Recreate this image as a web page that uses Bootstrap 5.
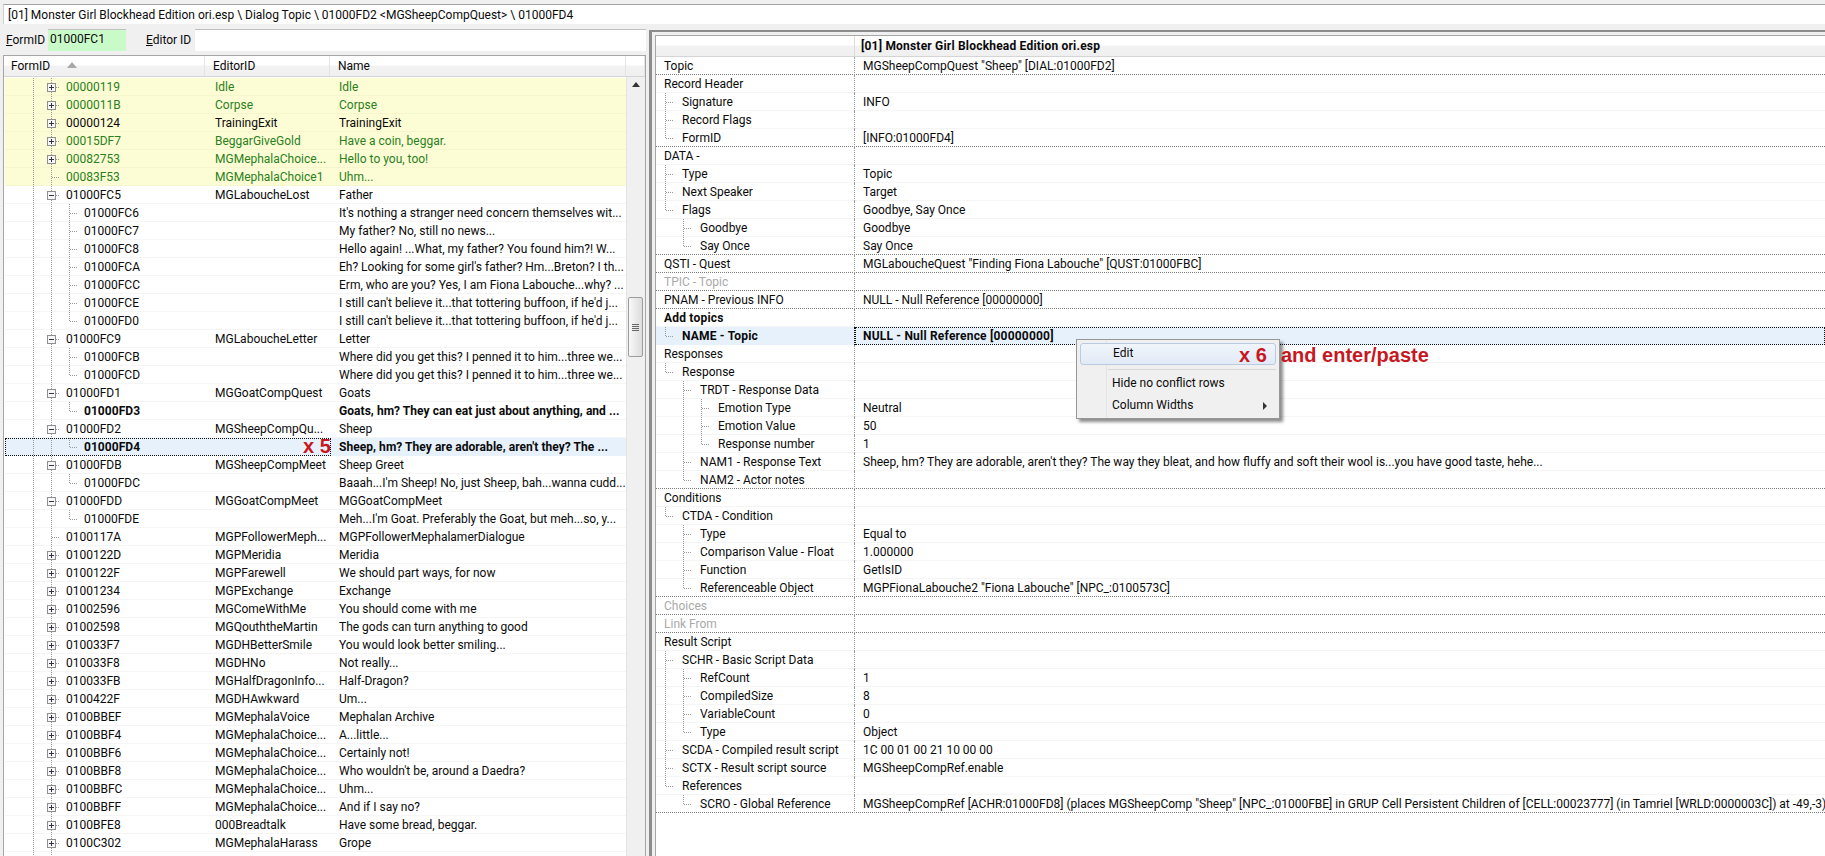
<!DOCTYPE html>
<html lang="en"><head><meta charset="utf-8"><title>xEdit</title>
<link href="https://cdn.jsdelivr.net/npm/bootstrap@5.3.0/dist/css/bootstrap.min.css" rel="stylesheet">
<style>
html,body{height:856px;overflow:hidden}
body{background:#f0f0f0;color:#0a0a0a;font:12px/16px Roboto,"Open Sans",sans-serif;--dv:repeating-linear-gradient(to bottom,#9a9a9a 0 1px,transparent 1px 2px);--dh:repeating-linear-gradient(to right,#9a9a9a 0 1px,transparent 1px 2px)}
.app{height:856px}
.fw-bold{letter-spacing:.2px}
.pathbar{margin:4px 0 0 3px;height:20px;flex:none;background:#fff;border-top:1px solid #a4a4a4;border-left:1px solid #d0d0d0;padding-left:4px;line-height:20px}
.lpane{width:646px;flex:none;padding-left:3px}
.filter{height:31px;padding-top:5px;flex:none}
.filter label{margin:3px 0 0 3px;width:42px;line-height:16px}
.filter label+input{width:78px}
.filter input+label{margin-left:20px;width:49px}
.filter input.form-control{height:22px;padding:0 2px 3px;border:0;border-top:1px solid #c0c0c0;border-radius:0;font:inherit;color:#0a0a0a;box-shadow:none}
.fid{background:#c9fbc9}
.grid{border:1px solid #a6a6a6;border-bottom:0;background:#fff}
.ghead{height:21px;flex:none;border-bottom:1px solid #d5d5d5;background:linear-gradient(#fff 45%,#f2f2f2 50%,#f0f0f0)}
.ghead>div{height:20px;line-height:21px;border-right:1px solid #e4e4e4}
.cw1{width:201px;padding-left:7px}.cw2{width:125px;padding-left:8px}.cw3{width:296px;padding-left:8px}.cw4{flex:1}
.sortup{width:0;height:0;display:inline-block;border:5px solid transparent;border-top:0;border-bottom:6px solid #a8a8a8;margin:0 0 2px 14px}
.lst{width:622px;flex:none;padding:1px 0 0 1px}
.scrollcol{flex:1;background:#f0f0f0;border-left:1px solid #e4e4e4;position:relative}
.arrowup{position:absolute;left:5px;top:5px;width:0;height:0;border:4px solid transparent;border-top:0;border-bottom:5px solid #333}
.thumb{position:absolute;left:1px;top:220px;width:15px;height:60px;border:1px solid #9d9d9d;border-radius:2px;background:linear-gradient(90deg,#f8f8f8,#dcdcdc)}
.thumb::after{content:"";position:absolute;left:3px;top:26px;width:7px;height:7px;background:repeating-linear-gradient(#666 0 1px,transparent 1px 2px)}
.lr{height:18px;line-height:18px;border-bottom:1px solid #f5f5f5}
.lr.fw-bold{letter-spacing:.05px}
.lr.ye{background:#fdfdd5;border-bottom-color:#f6f6cc}
.lr.gr{color:#2a7f1c}
.lr.sel{background:#e6f1fc;border-bottom-color:transparent;position:relative}
.lr.sel::before{content:"";position:absolute;left:0;top:0;width:326px;height:18px;border:1px dotted #111}
.c1{width:200px;padding-left:19px;background:var(--dv) 28px 0/1px 100% no-repeat;flex:none}
.c1 span{margin-left:6px}
.c2{width:125px;padding-left:9px;flex:none;white-space:nowrap;border-left:1px solid transparent}
.c3{flex:1;padding-left:9px;white-space:nowrap;overflow:hidden}
.xfive{color:#c8171e;font:700 20px/16px "Liberation Sans",sans-serif;margin-left:88px;letter-spacing:0}
.g{display:block;width:18px;height:18px;flex:none;position:relative}
.gv{background:var(--dv) 9px 0/1px 100% no-repeat}
.gt{background:var(--dv) 9px 0/1px 100% no-repeat,var(--dh) 10px 9px/8px 1px no-repeat}
.gl{background:var(--dv) 9px 0/1px 10px no-repeat,var(--dh) 10px 9px/8px 1px no-repeat}
.gp::after,.gm::after{content:"";position:absolute;left:5px;top:5px;width:9px;height:9px;border:1px solid #8e8f8f;background-color:#f6f6f6;background-repeat:no-repeat}
.gp::after{background-image:linear-gradient(#334,#334),linear-gradient(#334,#334);background-size:5px 1px,1px 5px;background-position:1px 3px,3px 1px}
.gm::after{background-image:linear-gradient(#334,#334);background-size:5px 1px;background-position:1px 3px}
.splitgap{width:3px;flex:none}
.rpane{margin-top:6px;border-top:2px solid #8c8c8c;border-left:3px solid #8c8c8c;padding:3px 0 0 3px;min-width:0}
.rgrid{border:1px solid #a6a6a6;border-width:1px 0 0 1px;background:#fff}
.rhead{height:21px;flex:none;border-bottom:1px solid #d5d5d5;background:linear-gradient(#fff 45%,#f2f2f2 50%,#f0f0f0);line-height:21px}
.rhead>div:first-child{width:199px;flex:none;border-right:1px solid #dcdcdc}
.rhead>div:last-child{padding-left:6px}
.rr{height:18px;line-height:18px;border-bottom:1px solid #f5f5f5;white-space:nowrap}
.rr.gb{border-bottom:1px dotted #7d7d7d}
.rl{width:199px;flex:none;padding-left:0;border-right:1px dotted #9a9a9a;height:18px;overflow:hidden}
.rl span{margin-left:8px}
.rv{padding-left:8px;flex:1}
.rr.dis{color:#a9a9a9}
.rr.foc{font-weight:700;letter-spacing:.2px;border-bottom-color:transparent}
.rr.foc .rl{background:#e6f1fc;border-right-color:#111}
.rr.foc .rv{background:#e6f1fc;outline:1px dotted #111;outline-offset:-1px;height:18px}
.ctx.dropdown-menu{top:339px;left:1076px;width:204px;height:80px;min-width:0;padding:3px;border:1px solid #979797;border-radius:0;background:#f0f0f0 linear-gradient(#e4e4e4,#e4e4e4) 29px 0/1px 100% no-repeat;box-shadow:3px 3px 3px rgba(0,0,0,.45);font:inherit;--bs-dropdown-font-size:12px;color:#0a0a0a}
.ctx .dropdown-item{height:22px;padding:0 0 0 32px;line-height:19px;font-size:12px;color:#0a0a0a;position:relative}
.ctx .dropdown-item.hot{background:linear-gradient(#f0f5fb,#e1eaf6);border:1px solid #b8cbe3;border-radius:3px;padding-left:32px}
.ctx .dropdown-divider{margin:4px 0 4px 28px;border-top:1px solid #d7d7d7;opacity:1}
.subarr{position:absolute;right:9px;top:6px;width:0;height:0;border:4px solid transparent;border-right:0;border-left:4px solid #333}
.note{position:absolute;top:344px;color:#c8171e;font:700 20px/22px "Liberation Sans",sans-serif;white-space:nowrap;z-index:1001}
.n6{left:1239px}.nap{left:1281px}
</style></head><body>
<div class="app d-flex flex-column overflow-hidden position-relative">
<div class="pathbar text-nowrap">[01] Monster Girl Blockhead Edition ori.esp \ Dialog Topic \ 01000FD2 &lt;MGSheepCompQuest&gt; \ 01000FD4</div>
<div class="d-flex flex-grow-1" style="min-height:0">
<div class="lpane d-flex flex-column">
<div class="filter d-flex"><label><u>F</u>ormID</label><input class="form-control fid" value="01000FC1"><label><u>E</u>ditor ID</label><input class="form-control flex-fill" value=""></div>
<div class="grid d-flex flex-column flex-grow-1 overflow-hidden">
<div class="ghead d-flex"><div class="cw1">FormID <i class="sortup"></i></div><div class="cw2">EditorID</div><div class="cw3">Name</div><div class="cw4"></div></div>
<div class="d-flex flex-grow-1">
<div class="lst">
<div class="lr ye gr d-flex"><div class="c1 d-flex"><i class="g"></i><i class="g gt gp"></i><span>00000119</span></div><div class="c2">Idle</div><div class="c3">Idle</div></div>
<div class="lr ye gr d-flex"><div class="c1 d-flex"><i class="g"></i><i class="g gt gp"></i><span>0000011B</span></div><div class="c2">Corpse</div><div class="c3">Corpse</div></div>
<div class="lr ye d-flex"><div class="c1 d-flex"><i class="g"></i><i class="g gt gp"></i><span>00000124</span></div><div class="c2">TrainingExit</div><div class="c3">TrainingExit</div></div>
<div class="lr ye gr d-flex"><div class="c1 d-flex"><i class="g"></i><i class="g gt gp"></i><span>00015DF7</span></div><div class="c2">BeggarGiveGold</div><div class="c3">Have a coin, beggar.</div></div>
<div class="lr ye gr d-flex"><div class="c1 d-flex"><i class="g"></i><i class="g gt gp"></i><span>00082753</span></div><div class="c2">MGMephalaChoice...</div><div class="c3">Hello to you, too!</div></div>
<div class="lr ye gr d-flex"><div class="c1 d-flex"><i class="g"></i><i class="g gt"></i><span>00083F53</span></div><div class="c2">MGMephalaChoice1</div><div class="c3">Uhm...</div></div>
<div class="lr d-flex"><div class="c1 d-flex"><i class="g"></i><i class="g gt gm"></i><span>01000FC5</span></div><div class="c2">MGLaboucheLost</div><div class="c3">Father</div></div>
<div class="lr d-flex"><div class="c1 d-flex"><i class="g"></i><i class="g gv"></i><i class="g gt"></i><span>01000FC6</span></div><div class="c2"></div><div class="c3">It's nothing a stranger need concern themselves wit...</div></div>
<div class="lr d-flex"><div class="c1 d-flex"><i class="g"></i><i class="g gv"></i><i class="g gt"></i><span>01000FC7</span></div><div class="c2"></div><div class="c3">My father? No, still no news...</div></div>
<div class="lr d-flex"><div class="c1 d-flex"><i class="g"></i><i class="g gv"></i><i class="g gt"></i><span>01000FC8</span></div><div class="c2"></div><div class="c3">Hello again! ...What, my father? You found him?! W...</div></div>
<div class="lr d-flex"><div class="c1 d-flex"><i class="g"></i><i class="g gv"></i><i class="g gt"></i><span>01000FCA</span></div><div class="c2"></div><div class="c3">Eh? Looking for some girl's father? Hm...Breton? I th...</div></div>
<div class="lr d-flex"><div class="c1 d-flex"><i class="g"></i><i class="g gv"></i><i class="g gt"></i><span>01000FCC</span></div><div class="c2"></div><div class="c3">Erm, who are you? Yes, I am Fiona Labouche...why? ...</div></div>
<div class="lr d-flex"><div class="c1 d-flex"><i class="g"></i><i class="g gv"></i><i class="g gt"></i><span>01000FCE</span></div><div class="c2"></div><div class="c3">I still can't believe it...that tottering buffoon, if he'd j...</div></div>
<div class="lr d-flex"><div class="c1 d-flex"><i class="g"></i><i class="g gv"></i><i class="g gl"></i><span>01000FD0</span></div><div class="c2"></div><div class="c3">I still can't believe it...that tottering buffoon, if he'd j...</div></div>
<div class="lr d-flex"><div class="c1 d-flex"><i class="g"></i><i class="g gt gm"></i><span>01000FC9</span></div><div class="c2">MGLaboucheLetter</div><div class="c3">Letter</div></div>
<div class="lr d-flex"><div class="c1 d-flex"><i class="g"></i><i class="g gv"></i><i class="g gt"></i><span>01000FCB</span></div><div class="c2"></div><div class="c3">Where did you get this? I penned it to him...three we...</div></div>
<div class="lr d-flex"><div class="c1 d-flex"><i class="g"></i><i class="g gv"></i><i class="g gl"></i><span>01000FCD</span></div><div class="c2"></div><div class="c3">Where did you get this? I penned it to him...three we...</div></div>
<div class="lr d-flex"><div class="c1 d-flex"><i class="g"></i><i class="g gt gm"></i><span>01000FD1</span></div><div class="c2">MGGoatCompQuest</div><div class="c3">Goats</div></div>
<div class="lr fw-bold d-flex"><div class="c1 d-flex"><i class="g"></i><i class="g gv"></i><i class="g gl"></i><span>01000FD3</span></div><div class="c2"></div><div class="c3">Goats, hm? They can eat just about anything, and ...</div></div>
<div class="lr d-flex"><div class="c1 d-flex"><i class="g"></i><i class="g gt gm"></i><span>01000FD2</span></div><div class="c2">MGSheepCompQu...</div><div class="c3">Sheep</div></div>
<div class="lr sel fw-bold d-flex"><div class="c1 d-flex"><i class="g"></i><i class="g gv"></i><i class="g gl"></i><span>01000FD4</span></div><div class="c2"><span class="xfive">x 5</span></div><div class="c3">Sheep, hm? They are adorable, aren't they? The ...</div></div>
<div class="lr d-flex"><div class="c1 d-flex"><i class="g"></i><i class="g gt gm"></i><span>01000FDB</span></div><div class="c2">MGSheepCompMeet</div><div class="c3">Sheep Greet</div></div>
<div class="lr d-flex"><div class="c1 d-flex"><i class="g"></i><i class="g gv"></i><i class="g gl"></i><span>01000FDC</span></div><div class="c2"></div><div class="c3">Baaah...I'm Sheep! No, just Sheep, bah...wanna cudd...</div></div>
<div class="lr d-flex"><div class="c1 d-flex"><i class="g"></i><i class="g gt gm"></i><span>01000FDD</span></div><div class="c2">MGGoatCompMeet</div><div class="c3">MGGoatCompMeet</div></div>
<div class="lr d-flex"><div class="c1 d-flex"><i class="g"></i><i class="g gv"></i><i class="g gl"></i><span>01000FDE</span></div><div class="c2"></div><div class="c3">Meh...I'm Goat. Preferably the Goat, but meh...so, y...</div></div>
<div class="lr d-flex"><div class="c1 d-flex"><i class="g"></i><i class="g gt"></i><span>0100117A</span></div><div class="c2">MGPFollowerMeph...</div><div class="c3">MGPFollowerMephalamerDialogue</div></div>
<div class="lr d-flex"><div class="c1 d-flex"><i class="g"></i><i class="g gt gp"></i><span>0100122D</span></div><div class="c2">MGPMeridia</div><div class="c3">Meridia</div></div>
<div class="lr d-flex"><div class="c1 d-flex"><i class="g"></i><i class="g gt gp"></i><span>0100122F</span></div><div class="c2">MGPFarewell</div><div class="c3">We should part ways, for now</div></div>
<div class="lr d-flex"><div class="c1 d-flex"><i class="g"></i><i class="g gt gp"></i><span>01001234</span></div><div class="c2">MGPExchange</div><div class="c3">Exchange</div></div>
<div class="lr d-flex"><div class="c1 d-flex"><i class="g"></i><i class="g gt gp"></i><span>01002596</span></div><div class="c2">MGComeWithMe</div><div class="c3">You should come with me</div></div>
<div class="lr d-flex"><div class="c1 d-flex"><i class="g"></i><i class="g gt gp"></i><span>01002598</span></div><div class="c2">MGQouththeMartin</div><div class="c3">The gods can turn anything to good</div></div>
<div class="lr d-flex"><div class="c1 d-flex"><i class="g"></i><i class="g gt gp"></i><span>010033F7</span></div><div class="c2">MGDHBetterSmile</div><div class="c3">You would look better smiling...</div></div>
<div class="lr d-flex"><div class="c1 d-flex"><i class="g"></i><i class="g gt gp"></i><span>010033F8</span></div><div class="c2">MGDHNo</div><div class="c3">Not really...</div></div>
<div class="lr d-flex"><div class="c1 d-flex"><i class="g"></i><i class="g gt gp"></i><span>010033FB</span></div><div class="c2">MGHalfDragonInfo...</div><div class="c3">Half-Dragon?</div></div>
<div class="lr d-flex"><div class="c1 d-flex"><i class="g"></i><i class="g gt gp"></i><span>0100422F</span></div><div class="c2">MGDHAwkward</div><div class="c3">Um...</div></div>
<div class="lr d-flex"><div class="c1 d-flex"><i class="g"></i><i class="g gt gp"></i><span>0100BBEF</span></div><div class="c2">MGMephalaVoice</div><div class="c3">Mephalan Archive</div></div>
<div class="lr d-flex"><div class="c1 d-flex"><i class="g"></i><i class="g gt gp"></i><span>0100BBF4</span></div><div class="c2">MGMephalaChoice...</div><div class="c3">A...little...</div></div>
<div class="lr d-flex"><div class="c1 d-flex"><i class="g"></i><i class="g gt gp"></i><span>0100BBF6</span></div><div class="c2">MGMephalaChoice...</div><div class="c3">Certainly not!</div></div>
<div class="lr d-flex"><div class="c1 d-flex"><i class="g"></i><i class="g gt gp"></i><span>0100BBF8</span></div><div class="c2">MGMephalaChoice...</div><div class="c3">Who wouldn't be, around a Daedra?</div></div>
<div class="lr d-flex"><div class="c1 d-flex"><i class="g"></i><i class="g gt gp"></i><span>0100BBFC</span></div><div class="c2">MGMephalaChoice...</div><div class="c3">Uhm...</div></div>
<div class="lr d-flex"><div class="c1 d-flex"><i class="g"></i><i class="g gt gp"></i><span>0100BBFF</span></div><div class="c2">MGMephalaChoice...</div><div class="c3">And if I say no?</div></div>
<div class="lr d-flex"><div class="c1 d-flex"><i class="g"></i><i class="g gt gp"></i><span>0100BFE8</span></div><div class="c2">000Breadtalk</div><div class="c3">Have some bread, beggar.</div></div>
<div class="lr d-flex"><div class="c1 d-flex"><i class="g"></i><i class="g gt gp"></i><span>0100C302</span></div><div class="c2">MGMephalaHarass</div><div class="c3">Grope</div></div>
<div class="lr d-flex"><div class="c1 d-flex"><i class="g"></i><i class="g gv"></i></div></div>
</div>
<div class="scrollcol"><i class="arrowup"></i><i class="thumb"></i></div>
</div>
</div>
</div>
<div class="splitgap"></div>
<div class="rpane d-flex flex-column flex-grow-1">
<div class="rgrid d-flex flex-column flex-grow-1 overflow-hidden">
<div class="rhead d-flex fw-bold"><div></div><div>[01] Monster Girl Blockhead Edition ori.esp</div></div>
<div class="rr gb d-flex"><div class="rl d-flex"><span>Topic</span></div><div class="rv">MGSheepCompQuest "Sheep" [DIAL:01000FD2]</div></div>
<div class="rr d-flex"><div class="rl d-flex"><span>Record Header</span></div><div class="rv"></div></div>
<div class="rr d-flex"><div class="rl d-flex"><i class="g gt"></i><span>Signature</span></div><div class="rv">INFO</div></div>
<div class="rr d-flex"><div class="rl d-flex"><i class="g gt"></i><span>Record Flags</span></div><div class="rv"></div></div>
<div class="rr gb d-flex"><div class="rl d-flex"><i class="g gl"></i><span>FormID</span></div><div class="rv">[INFO:01000FD4]</div></div>
<div class="rr d-flex"><div class="rl d-flex"><span>DATA -</span></div><div class="rv"></div></div>
<div class="rr d-flex"><div class="rl d-flex"><i class="g gt"></i><span>Type</span></div><div class="rv">Topic</div></div>
<div class="rr d-flex"><div class="rl d-flex"><i class="g gt"></i><span>Next Speaker</span></div><div class="rv">Target</div></div>
<div class="rr d-flex"><div class="rl d-flex"><i class="g gl"></i><span>Flags</span></div><div class="rv">Goodbye, Say Once</div></div>
<div class="rr d-flex"><div class="rl d-flex"><i class="g"></i><i class="g gt"></i><span>Goodbye</span></div><div class="rv">Goodbye</div></div>
<div class="rr gb d-flex"><div class="rl d-flex"><i class="g"></i><i class="g gl"></i><span>Say Once</span></div><div class="rv">Say Once</div></div>
<div class="rr gb d-flex"><div class="rl d-flex"><span>QSTI - Quest</span></div><div class="rv">MGLaboucheQuest "Finding Fiona Labouche" [QUST:01000FBC]</div></div>
<div class="rr gb dis d-flex"><div class="rl d-flex"><span>TPIC - Topic</span></div><div class="rv"></div></div>
<div class="rr gb d-flex"><div class="rl d-flex"><span>PNAM - Previous INFO</span></div><div class="rv">NULL - Null Reference [00000000]</div></div>
<div class="rr d-flex fw-bold"><div class="rl d-flex"><span>Add topics</span></div><div class="rv"></div></div>
<div class="rr foc d-flex"><div class="rl d-flex"><i class="g gl"></i><span>NAME - Topic</span></div><div class="rv">NULL - Null Reference [00000000]</div></div>
<div class="rr d-flex"><div class="rl d-flex"><span>Responses</span></div><div class="rv"></div></div>
<div class="rr d-flex"><div class="rl d-flex"><i class="g gl"></i><span>Response</span></div><div class="rv"></div></div>
<div class="rr d-flex"><div class="rl d-flex"><i class="g"></i><i class="g gt"></i><span>TRDT - Response Data</span></div><div class="rv"></div></div>
<div class="rr d-flex"><div class="rl d-flex"><i class="g"></i><i class="g gv"></i><i class="g gt"></i><span>Emotion Type</span></div><div class="rv">Neutral</div></div>
<div class="rr d-flex"><div class="rl d-flex"><i class="g"></i><i class="g gv"></i><i class="g gt"></i><span>Emotion Value</span></div><div class="rv">50</div></div>
<div class="rr d-flex"><div class="rl d-flex"><i class="g"></i><i class="g gv"></i><i class="g gl"></i><span>Response number</span></div><div class="rv">1</div></div>
<div class="rr d-flex"><div class="rl d-flex"><i class="g"></i><i class="g gt"></i><span>NAM1 - Response Text</span></div><div class="rv">Sheep, hm? They are adorable, aren't they? The way they bleat, and how fluffy and soft their wool is...you have good taste, hehe...</div></div>
<div class="rr gb d-flex"><div class="rl d-flex"><i class="g"></i><i class="g gl"></i><span>NAM2 - Actor notes</span></div><div class="rv"></div></div>
<div class="rr d-flex"><div class="rl d-flex"><span>Conditions</span></div><div class="rv"></div></div>
<div class="rr d-flex"><div class="rl d-flex"><i class="g gl"></i><span>CTDA - Condition</span></div><div class="rv"></div></div>
<div class="rr d-flex"><div class="rl d-flex"><i class="g"></i><i class="g gt"></i><span>Type</span></div><div class="rv">Equal to</div></div>
<div class="rr d-flex"><div class="rl d-flex"><i class="g"></i><i class="g gt"></i><span>Comparison Value - Float</span></div><div class="rv">1.000000</div></div>
<div class="rr d-flex"><div class="rl d-flex"><i class="g"></i><i class="g gt"></i><span>Function</span></div><div class="rv">GetIsID</div></div>
<div class="rr gb d-flex"><div class="rl d-flex"><i class="g"></i><i class="g gl"></i><span>Referenceable Object</span></div><div class="rv">MGPFionaLabouche2 "Fiona Labouche" [NPC_:0100573C]</div></div>
<div class="rr gb dis d-flex"><div class="rl d-flex"><span>Choices</span></div><div class="rv"></div></div>
<div class="rr gb dis d-flex"><div class="rl d-flex"><span>Link From</span></div><div class="rv"></div></div>
<div class="rr d-flex"><div class="rl d-flex"><span>Result Script</span></div><div class="rv"></div></div>
<div class="rr d-flex"><div class="rl d-flex"><i class="g gt"></i><span>SCHR - Basic Script Data</span></div><div class="rv"></div></div>
<div class="rr d-flex"><div class="rl d-flex"><i class="g gv"></i><i class="g gt"></i><span>RefCount</span></div><div class="rv">1</div></div>
<div class="rr d-flex"><div class="rl d-flex"><i class="g gv"></i><i class="g gt"></i><span>CompiledSize</span></div><div class="rv">8</div></div>
<div class="rr d-flex"><div class="rl d-flex"><i class="g gv"></i><i class="g gt"></i><span>VariableCount</span></div><div class="rv">0</div></div>
<div class="rr d-flex"><div class="rl d-flex"><i class="g gv"></i><i class="g gl"></i><span>Type</span></div><div class="rv">Object</div></div>
<div class="rr d-flex"><div class="rl d-flex"><i class="g gt"></i><span>SCDA - Compiled result script</span></div><div class="rv">1C 00 01 00 21 10 00 00</div></div>
<div class="rr d-flex"><div class="rl d-flex"><i class="g gt"></i><span>SCTX - Result script source</span></div><div class="rv">MGSheepCompRef.enable</div></div>
<div class="rr d-flex"><div class="rl d-flex"><i class="g gl"></i><span>References</span></div><div class="rv"></div></div>
<div class="rr gb d-flex"><div class="rl d-flex"><i class="g"></i><i class="g gl"></i><span>SCRO - Global Reference</span></div><div class="rv">MGSheepCompRef [ACHR:01000FD8] (places MGSheepComp "Sheep" [NPC_:01000FBE] in GRUP Cell Persistent Children of [CELL:00023777] (in Tamriel [WRLD:0000003C]) at -49,-3)</div></div>
</div>
</div>
</div>
<ul class="dropdown-menu show ctx list-unstyled">
<li><a class="dropdown-item hot" href="#">Edit</a></li>
<li><hr class="dropdown-divider"></li>
<li><a class="dropdown-item" href="#">Hide no conflict rows</a></li>
<li><a class="dropdown-item" href="#">Column Widths<i class="subarr"></i></a></li>
</ul>
<div class="note n6">x 6</div><div class="note nap">and enter/paste</div>
</div>
<script src="https://cdn.jsdelivr.net/npm/bootstrap@5.3.0/dist/js/bootstrap.bundle.min.js"></script>
</body></html>
